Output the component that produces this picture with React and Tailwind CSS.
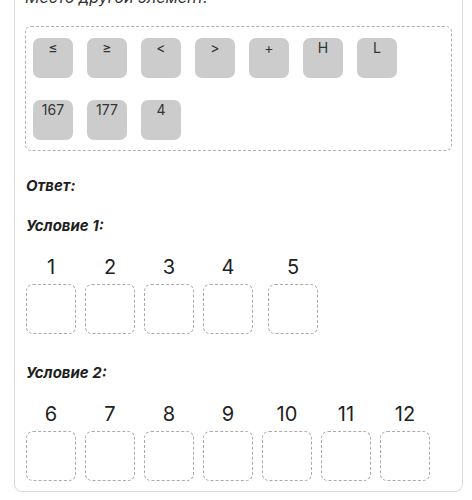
import React from 'react';

const tiles = [['≤', '≥', '<', '>', '+', 'H', 'L'], ['167', '177', '4']];

function Tile({ label }) {
  return (
    <div className="h-[40px] w-[40px] rounded-[7px] bg-[#cccccc] text-center text-[14px] leading-5 text-[#333]">
      {label}
    </div>
  );
}

function Slot({ n, extra }) {
  return (
    <div className={`flex w-[50px] flex-col items-center ${extra || ''}`}>
      <div className="text-[20px] leading-7 text-[#222]">{n}</div>
      <div className="mt-[3px] h-[50px] w-[50px] rounded-[7px] border border-dashed border-[#aaaaaa]" />
    </div>
  );
}

function Condition({ title, nums, className }) {
  return (
    <div className={className}>
      <div className="text-[15px] font-bold italic leading-[22px] text-[#1f1f1f]">{title}</div>
      <div className="mt-[16px] flex gap-[9px]">
        {nums.map((n, i) => (
          <Slot key={n} n={n} extra={nums.length === 5 && i === 4 ? 'ml-[6px]' : ''} />
        ))}
      </div>
    </div>
  );
}

export default function App() {
  return (
    <div className="h-[500px] w-[472px] overflow-hidden bg-white font-['Inter',sans-serif]">
      <div className="-mt-[15px] ml-[14px] w-[449px] rounded-b-[8px] border border-t-0 border-[#dcdcdc] px-[10px] pb-[10px]">
        <p className="text-[16px] italic leading-6 text-[#333]">Место другой элемент.</p>
        <div className="mt-[17px] flex flex-col gap-[22px] rounded-[6px] border border-dashed border-[#b0b0b0] pb-[10px] pl-[7px] pt-[11px]">
          {tiles.map((row, r) => (
            <div key={r} className="flex gap-[14px]">
              {row.map((t) => (
                <Tile key={t} label={t} />
              ))}
            </div>
          ))}
        </div>
        <div className="ml-px mt-[24px] text-[15px] font-bold italic leading-[22px] text-[#1f1f1f]">Ответ:</div>
        <Condition className="ml-px mt-[18px]" title="Условие 1:" nums={[1, 2, 3, 4, 5]} />
        <Condition className="ml-px mt-[28px]" title="Условие 2:" nums={[6, 7, 8, 9, 10, 11, 12]} />
      </div>
    </div>
  );
}
